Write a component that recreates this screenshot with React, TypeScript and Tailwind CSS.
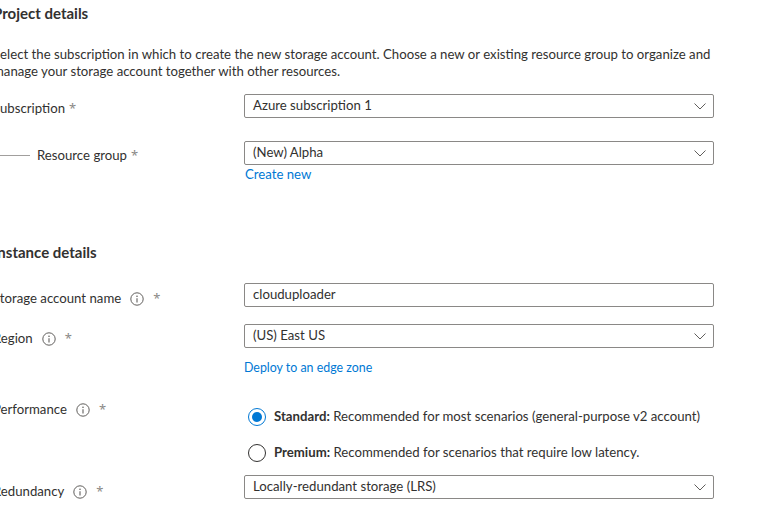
import type { ReactNode } from 'react';

const font = { fontFamily: 'Lato, "Noto Sans", sans-serif' };

function Chevron() {
  return (
    <svg width="12" height="7" viewBox="0 0 12 7" className="shrink-0">
      <path d="M0.5 0.5 L6 6 L11.5 0.5" fill="none" stroke="#605e5c" strokeWidth="1" />
    </svg>
  );
}

function InfoIcon() {
  return (
    <svg width="14" height="14" viewBox="0 0 14 14" className="shrink-0">
      <circle cx="7" cy="7" r="6.2" fill="none" stroke="#605e5c" strokeWidth="1" />
      <circle cx="7" cy="4.3" r="0.8" fill="#605e5c" />
      <path d="M7 6.2 V10.4" stroke="#605e5c" strokeWidth="1.1" />
    </svg>
  );
}

function Label({ text, info, indent }: { text: string; info?: boolean; indent?: boolean }) {
  return (
    <div className="flex items-center text-[13.2px] text-[#323130]">
      {indent && <span className="w-[37px] h-px bg-[#a19f9d] mr-[7px]" />}
      <span>{text}</span>
      {info && (
        <span className="ml-[9px] flex items-center">
          <InfoIcon />
        </span>
      )}
      <span
        className={`${info ? 'ml-[9px]' : 'ml-[4px]'} text-[#8a8886] font-['Noto_Sans'] text-[13px] leading-none`}
      >
        *
      </span>
    </div>
  );
}

function Select({ value }: { value: string }) {
  return (
    <div className="h-[24px] w-[470px] border border-[#8a8886] rounded-[2px] flex items-center justify-between pl-[8px] pr-[7px] text-[13.2px] text-[#323130]">
      <span>{value}</span>
      <Chevron />
    </div>
  );
}

function Input({ value }: { value: string }) {
  return (
    <div className="h-[24px] w-[470px] border border-[#8a8886] rounded-[2px] flex items-center pl-[8px] text-[13.2px] text-[#323130]">
      {value}
    </div>
  );
}

function Row({ label, children, className }: { label: ReactNode; children: ReactNode; className?: string }) {
  return (
    <div className={`flex ${className ?? ''}`}>
      <div className="w-[251px] shrink-0">{label}</div>
      <div>{children}</div>
    </div>
  );
}

function Radio({ checked, title, text }: { checked?: boolean; title: string; text: string }) {
  return (
    <div className="flex items-center h-[20px] ml-[4px]">
      <span
        className={`w-[18px] h-[18px] rounded-full border flex items-center justify-center ${
          checked ? 'border-[#0078d4]' : 'border-[#323130]'
        }`}
      >
        {checked && <span className="w-[10px] h-[10px] rounded-full bg-[#0078d4]" />}
      </span>
      <span className="ml-[8px] text-[13.2px] text-[#323130]">
        <span className="font-bold">{title}</span> {text}
      </span>
    </div>
  );
}

export default function App() {
  return (
    <div className="w-[761px] h-[526px] overflow-hidden bg-white" style={font}>
      <div className="-ml-[7px] pt-[3px]">
        <h2 className="text-[15px] font-bold leading-[20px] text-[#323130]">Project details</h2>

        <p className="mt-[23px] text-[13.2px] leading-[17px] text-[#323130] w-[730px]">
          Select the subscription in which to create the new storage account. Choose a new or existing resource
          group to organize and manage your storage account together with other resources.
        </p>

        <Row className="mt-[14px] h-[24px]" label={<div className="pt-[5px]"><Label text="Subscription" /></div>}>
          <Select value="Azure subscription 1" />
        </Row>

        <Row
          className="mt-[23px]"
          label={<div className="pt-[5px]"><Label text="Resource group" indent /></div>}
        >
          <Select value="(New) Alpha" />
          <div className="mt-[1px] text-[13.2px] leading-[17px] text-[#0078d4] pl-px">Create new</div>
        </Row>

        <h2 className="mt-[59px] text-[15px] font-bold leading-[20px] text-[#323130]">Instance details</h2>

        <Row
          className="mt-[21px] h-[24px]"
          label={<div className="pt-[6px]"><Label text="Storage account name" info /></div>}
        >
          <Input value="clouduploader" />
        </Row>

        <Row className="mt-[17px]" label={<div className="pt-[5px]"><Label text="Region" info /></div>}>
          <Select value="(US) East US" />
          <div className="mt-[11px] text-[12.4px] leading-[17px] text-[#0078d4]">Deploy to an edge zone</div>
        </Row>

        <Row className="mt-[25px]" label={<div className="-mt-[1px]"><Label text="Performance" info /></div>}>
          <div className="pt-[6px] flex flex-col gap-[16px]">
            <Radio checked title="Standard:" text="Recommended for most scenarios (general-purpose v2 account)" />
            <Radio title="Premium:" text="Recommended for scenarios that require low latency." />
          </div>
        </Row>

        <Row
          className="mt-[12px] h-[24px]"
          label={<div className="pt-[7px]"><Label text="Redundancy" info /></div>}
        >
          <Select value="Locally-redundant storage (LRS)" />
        </Row>
      </div>
    </div>
  );
}
